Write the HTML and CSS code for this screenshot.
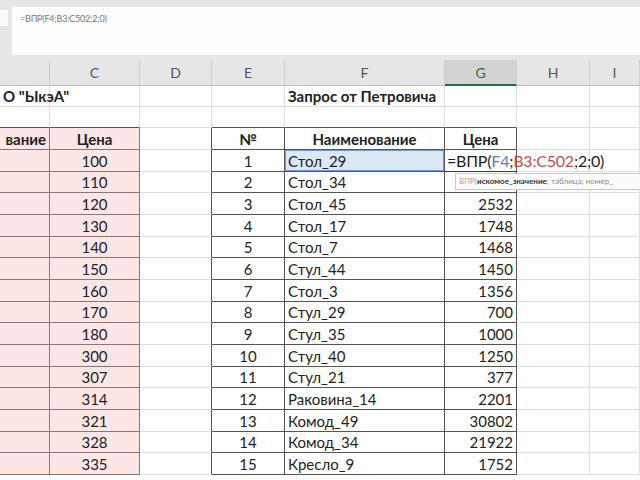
FILE: index.html
```html
<!DOCTYPE html>
<html>
<head>
<meta charset="utf-8">
<link rel="stylesheet" href="styles.css">
</head>
<body>
<div class="top">
  <div class="namebox"></div>
  <div class="fx">=ВПР(F4;B3:C502;2;0)</div>
</div>
<div class="sheet">
  <!-- column headers -->
  <div class="ch"></div><div class="ch">C</div><div class="ch">D</div><div class="ch">E</div><div class="ch">F</div><div class="ch sel">G</div><div class="ch">H</div><div class="ch">I</div>
  <!-- row 1 -->
  <div class="c b ov">О "ЫкэА"</div><div class="c"></div><div class="c"></div><div class="c"></div><div class="c b ov">Запрос от Петровича</div><div class="c"></div><div class="c"></div><div class="c"></div>
  <!-- row 2 -->
  <div class="c ab"></div><div class="c ab"></div><div class="c"></div><div class="c ab"></div><div class="c ab"></div><div class="c ab"></div><div class="c"></div><div class="c"></div>
  <!-- header row -->
  <div class="c pk b r">вание</div><div class="c pk b m">Цена</div><div class="c lb"></div><div class="c tb b m">№</div><div class="c tb b m">Наименование</div><div class="c tb b m">Цена</div><div class="c"></div><div class="c"></div>
  <!-- data -->
  <div class="c pk"></div><div class="c pk m">100</div><div class="c lb"></div><div class="c tb m">1</div><div class="c tb ref">Стол_29</div><div class="c tb edit"><span class="etext">=ВПР(<span class="rb">F4</span>;<span class="rr">B3:C502</span>;2;0)</span></div><div class="c"></div><div class="c"></div>
  <div class="c pk"></div><div class="c pk m">110</div><div class="c lb"></div><div class="c tb m">2</div><div class="c tb">Стол_34</div><div class="c tb r"></div><div class="c"></div><div class="c"></div>
  <div class="c pk"></div><div class="c pk m">120</div><div class="c lb"></div><div class="c tb m">3</div><div class="c tb">Стол_45</div><div class="c tb r">2532</div><div class="c"></div><div class="c"></div>
  <div class="c pk"></div><div class="c pk m">130</div><div class="c lb"></div><div class="c tb m">4</div><div class="c tb">Стол_17</div><div class="c tb r">1748</div><div class="c"></div><div class="c"></div>
  <div class="c pk"></div><div class="c pk m">140</div><div class="c lb"></div><div class="c tb m">5</div><div class="c tb">Стол_7</div><div class="c tb r">1468</div><div class="c"></div><div class="c"></div>
  <div class="c pk"></div><div class="c pk m">150</div><div class="c lb"></div><div class="c tb m">6</div><div class="c tb">Стул_44</div><div class="c tb r">1450</div><div class="c"></div><div class="c"></div>
  <div class="c pk"></div><div class="c pk m">160</div><div class="c lb"></div><div class="c tb m">7</div><div class="c tb">Стол_3</div><div class="c tb r">1356</div><div class="c"></div><div class="c"></div>
  <div class="c pk"></div><div class="c pk m">170</div><div class="c lb"></div><div class="c tb m">8</div><div class="c tb">Стул_29</div><div class="c tb r">700</div><div class="c"></div><div class="c"></div>
  <div class="c pk"></div><div class="c pk m">180</div><div class="c lb"></div><div class="c tb m">9</div><div class="c tb">Стул_35</div><div class="c tb r">1000</div><div class="c"></div><div class="c"></div>
  <div class="c pk"></div><div class="c pk m">300</div><div class="c lb"></div><div class="c tb m">10</div><div class="c tb">Стул_40</div><div class="c tb r">1250</div><div class="c"></div><div class="c"></div>
  <div class="c pk"></div><div class="c pk m">307</div><div class="c lb"></div><div class="c tb m">11</div><div class="c tb">Стул_21</div><div class="c tb r">377</div><div class="c"></div><div class="c"></div>
  <div class="c pk"></div><div class="c pk m">314</div><div class="c lb"></div><div class="c tb m">12</div><div class="c tb">Раковина_14</div><div class="c tb r">2201</div><div class="c"></div><div class="c"></div>
  <div class="c pk"></div><div class="c pk m">321</div><div class="c lb"></div><div class="c tb m">13</div><div class="c tb">Комод_49</div><div class="c tb r">30802</div><div class="c"></div><div class="c"></div>
  <div class="c pk"></div><div class="c pk m">328</div><div class="c lb"></div><div class="c tb m">14</div><div class="c tb">Комод_34</div><div class="c tb r">21922</div><div class="c"></div><div class="c"></div>
  <div class="c pk"></div><div class="c pk m">335</div><div class="c lb"></div><div class="c tb m">15</div><div class="c tb">Кресло_9</div><div class="c tb r">1752</div><div class="c"></div><div class="c"></div>
  <div class="tip"><span class="tfn">ВПР(</span><span class="targ">искомое_значение</span>; таблица; номер_</div>
</div>
</body>
</html>
```

FILE: styles.css
```css
html, body {
  margin: 0;
  padding: 0;
  background: #ffffff;
  width: 640px;
  height: 480px;
  overflow: hidden;
  font-family: Lato, "Open Sans", "Liberation Sans", sans-serif;
}

.top {
  height: 60px;
  background: #e6e6e6;
  display: flex;
  align-items: flex-start;
  padding-top: 7px;
  box-sizing: border-box;
  gap: 4px;
}

.namebox {
  width: 8px;
  height: 16px;
  margin-top: 3px;
  background: #fbfbfb;
}

.fx {
  flex: 1;
  height: 48px;
  background: #fdfdfd;
  font-size: 9px;
  color: #777;
  padding: 6px 8px;
  box-sizing: border-box;
  letter-spacing: -0.2px;
}

.sheet {
  position: relative;
  display: grid;
  grid-template-columns: 50px 90px 72px 73px 160px 72px 73px 50px;
  grid-template-rows: 26px 21px 21px 22px repeat(15, 21.67px);
  font-size: 15px;
  color: #222;
}

.ch {
  background: #e6e6e6;
  border-right: 1px solid #cfcfcf;
  border-bottom: 1px solid #bdbdbd;
  display: flex;
  align-items: center;
  justify-content: center;
  font-size: 14px;
  color: #555;
  box-sizing: border-box;
}

.ch.sel {
  background: #d3d3d3;
  color: #3d6b4e;
  border-bottom: 2px solid #217346;
}

.c {
  box-sizing: border-box;
  border-right: 1px solid #dedede;
  border-bottom: 1px solid #dedede;
  display: flex;
  align-items: flex-end;
  padding: 0 3px 1px 3px;
  white-space: nowrap;
  line-height: 18px;
}

.ov { overflow: visible; }
.b { font-weight: 700; }
.m { justify-content: center; }
.r { justify-content: flex-end; }

.ab { border-bottom-color: #555; }
.lb { border-right-color: #555; }

.tb {
  border-right-color: #555;
  border-bottom-color: #555;
}

.pk {
  background: #fce6e6;
  border-right-color: #8a7676;
  border-bottom-color: #8a7676;
}

.ref {
  background: #dde8f6;
  box-shadow: inset 0 0 0 1px #6f9ad6;
}

.edit {
  position: relative;
  overflow: visible;
  z-index: 2;
  padding-left: 2px;
  border-bottom-color: #3a3a3a;
}

.etext {
  font-size: 16px;
  color: #1e1e1e;
  letter-spacing: -0.2px;
}

.rb { color: #4a7fd0; }
.rr { color: #c0504d; }

.tip {
  position: absolute;
  left: 455px;
  top: 113px;
  width: 200px;
  height: 15px;
  background: #fbfbfb;
  border: 1px solid #c8c8c8;
  font-size: 8px;
  line-height: 14px;
  color: #8a8a8a;
  padding-left: 3px;
  white-space: nowrap;
  z-index: 3;
}

.tfn { color: #d98c8c; }
.targ { color: #333; font-weight: 700; }
```
